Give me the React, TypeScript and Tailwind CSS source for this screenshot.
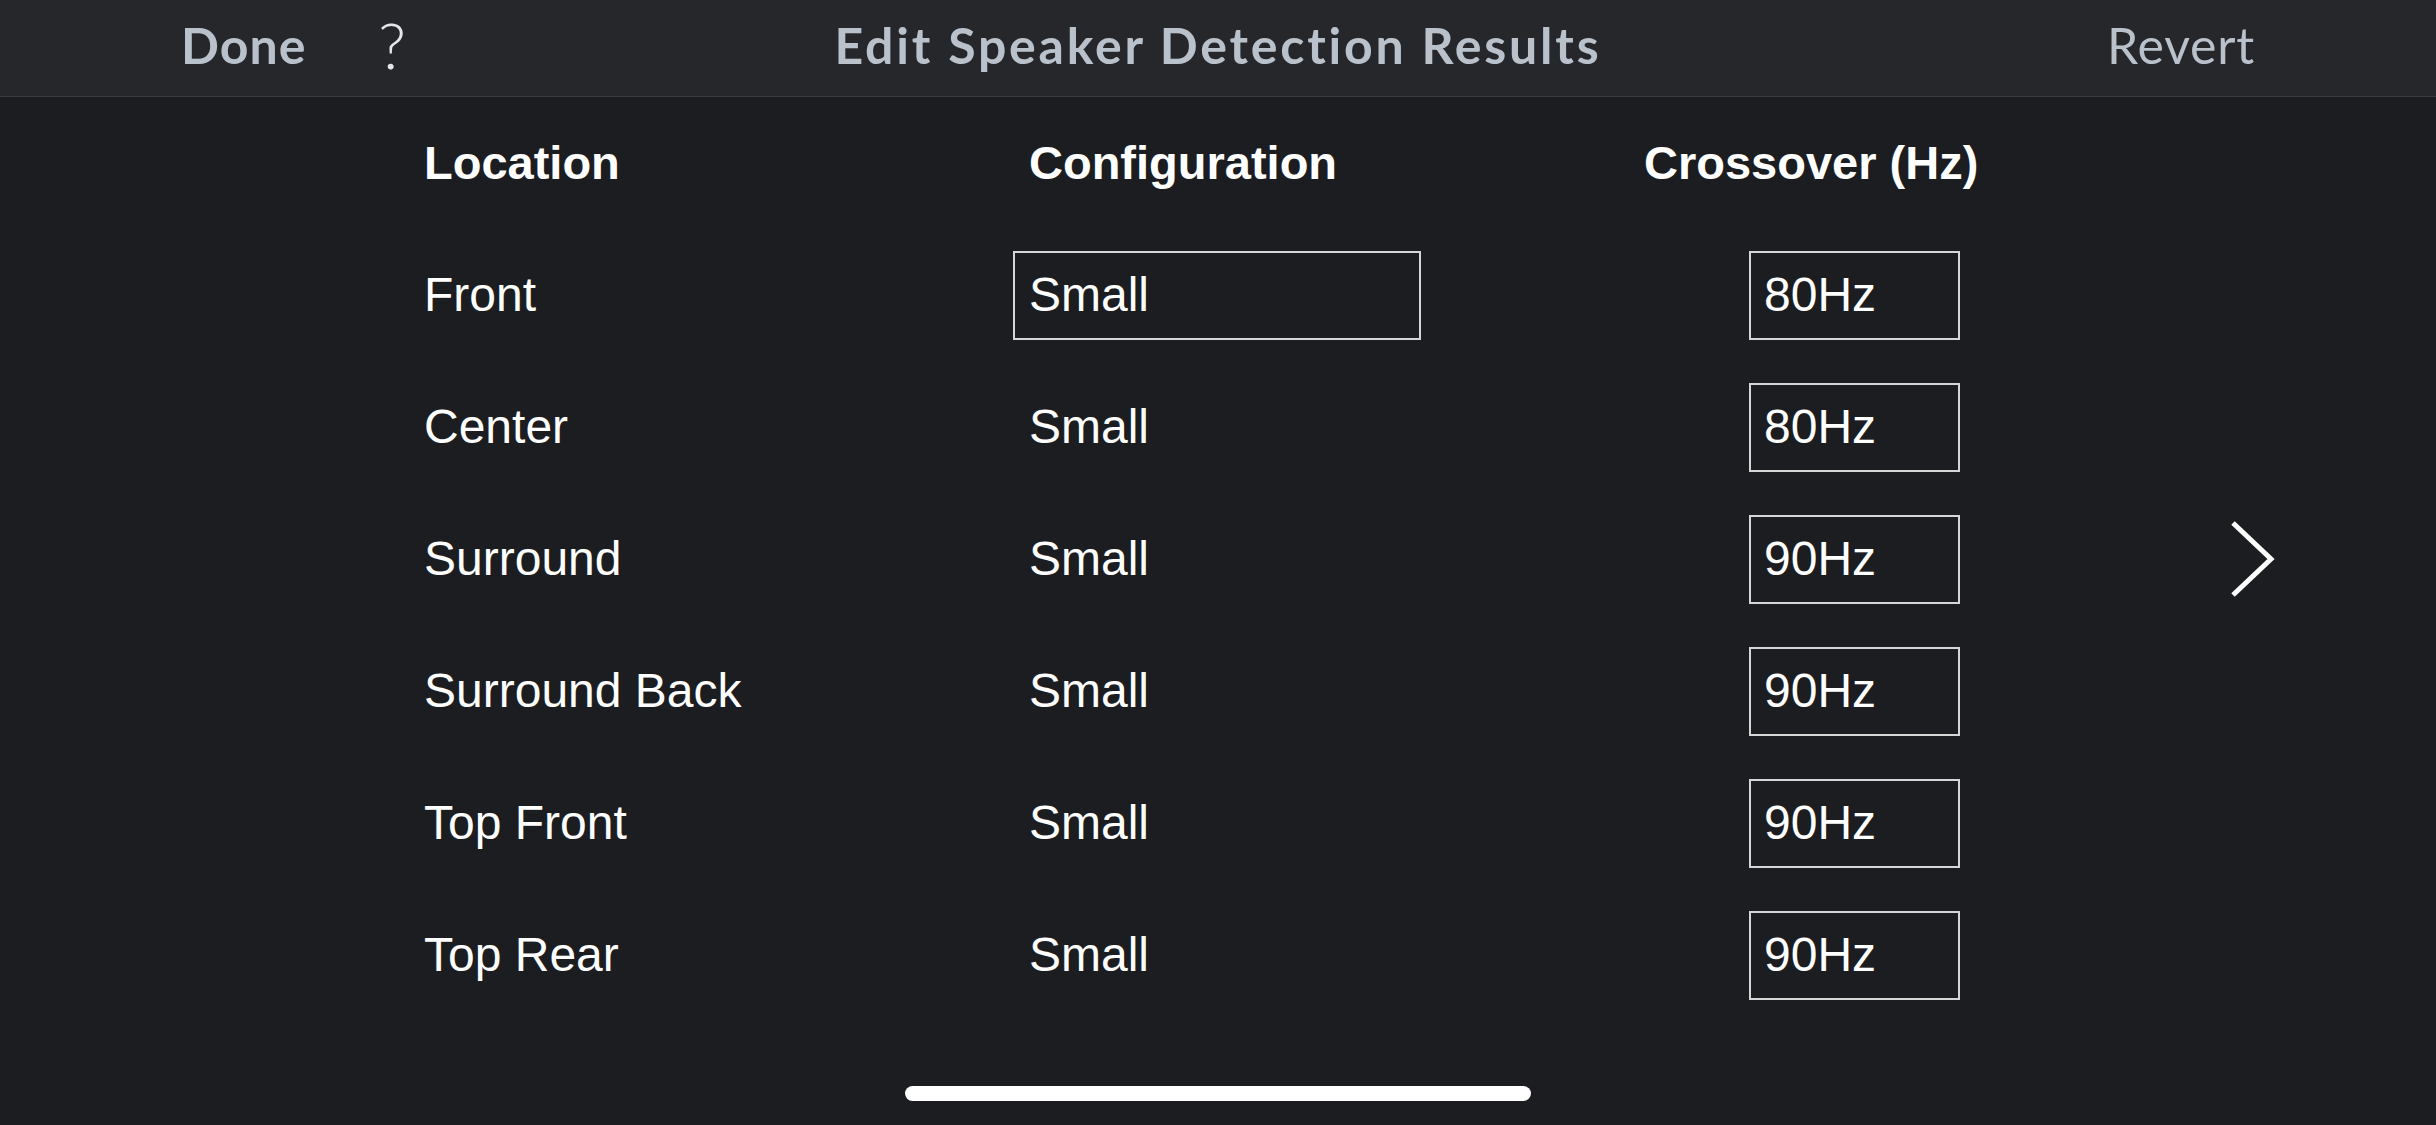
import React from 'react';

const rows = [
  { location: 'Front', config: 'Small', crossover: '80Hz', active: true },
  { location: 'Center', config: 'Small', crossover: '80Hz' },
  { location: 'Surround', config: 'Small', crossover: '90Hz' },
  { location: 'Surround Back', config: 'Small', crossover: '90Hz' },
  { location: 'Top Front', config: 'Small', crossover: '90Hz' },
  { location: 'Top Rear', config: 'Small', crossover: '90Hz' },
];

function TopBar() {
  return (
    <header className="grid grid-cols-[1fr_auto_1fr] items-center h-[97px] bg-[#26272b] border-b border-[#3b3c40] pb-[6px] font-['Lato',sans-serif] text-[#b9c1ca]">
      <div className="flex items-center pl-[181px]">
        <span className="text-[50px] font-bold leading-none tracking-[1px]">Done</span>
        <span className="ml-[72px] text-[64px] font-light leading-none text-[#e3e7eb]">?</span>
      </div>
      <h1 className="text-[50px] font-bold leading-none tracking-[2.8px]">Edit Speaker Detection Results</h1>
      <div className="flex justify-end pr-[181px]">
        <span className="text-[50px] leading-none tracking-[0.8px]">Revert</span>
      </div>
    </header>
  );
}

function SpeakerTable() {
  return (
    <div className="grid grid-cols-[589px_631px_335px] auto-rows-[132px] items-center font-['Liberation_Sans',Arial,sans-serif] text-[48px] text-white">
      <div className="font-bold text-[47px]">Location</div>
      <div className="font-bold text-[47px] pl-[16px]">Configuration</div>
      <div className="font-bold text-[47px] whitespace-nowrap">Crossover (Hz)</div>
      {rows.map((row) => (
        <React.Fragment key={row.location}>
          <div>{row.location}</div>
          <div className={`w-[408px] h-[89px] flex items-center pl-[14px] border-2 ${row.active ? 'border-[#d6d6d6]' : 'border-transparent'}`}>
            {row.config}
          </div>
          <div className="ml-[105px] w-[211px] h-[89px] flex items-center pl-[13px] border-2 border-[#d6d6d6]">
            {row.crossover}
          </div>
        </React.Fragment>
      ))}
    </div>
  );
}

export default function App() {
  return (
    <div className="h-[1125px] w-[2436px] flex flex-col bg-[#1c1d21] overflow-hidden">
      <TopBar />
      <main className="flex items-center pl-[424px]">
        <SpeakerTable />
        <svg width="46" height="78" viewBox="0 0 46 78" className="ml-[250px]">
          <polyline points="4,3 42,39 4,75" fill="none" stroke="white" strokeWidth="5" />
        </svg>
      </main>
      <div className="flex-1" />
      <div className="mx-auto mb-[24px] w-[626px] h-[15px] rounded-full bg-white" />
    </div>
  );
}
